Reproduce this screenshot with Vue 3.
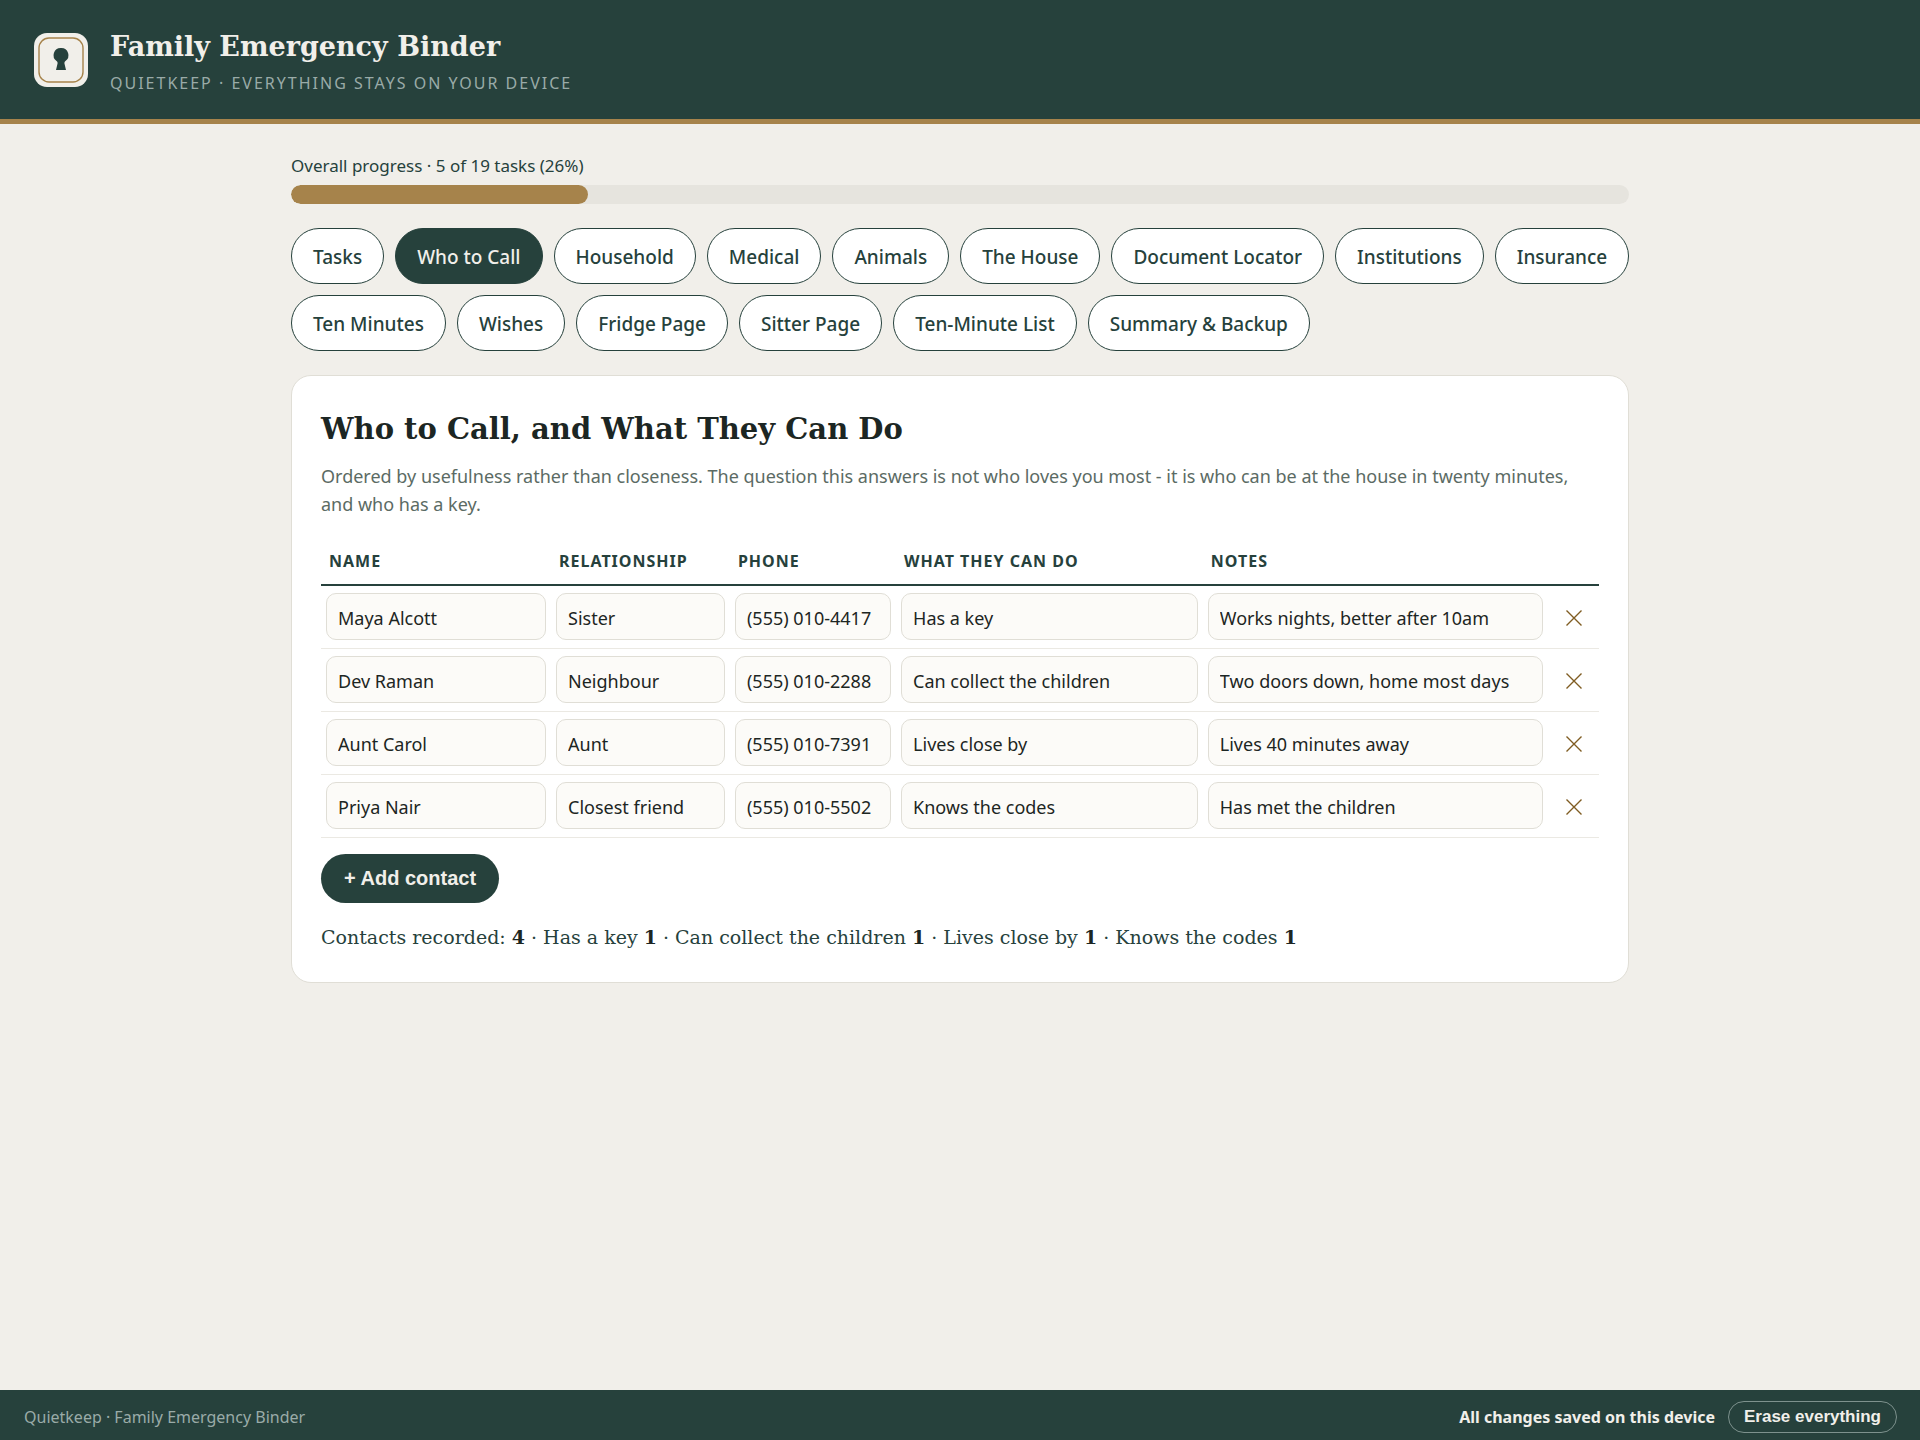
<script setup>
import { computed, ref } from 'vue'

const tabs = [
  'Tasks', 'Who to Call', 'Household', 'Medical', 'Animals', 'The House', 'Document Locator',
  'Institutions', 'Insurance', 'Ten Minutes', 'Wishes', 'Fridge Page', 'Sitter Page',
  'Ten-Minute List', 'Summary & Backup',
]
const active = ref('Who to Call')
const barWidth = ref(22.2)

const columns = [
  { key: 'name', label: 'Name' },
  { key: 'relationship', label: 'Relationship' },
  { key: 'phone', label: 'Phone' },
  { key: 'help', label: 'What they can do' },
  { key: 'notes', label: 'Notes' },
]
const contacts = ref([
  { name: 'Maya Alcott', relationship: 'Sister', phone: '(555) 010-4417', help: 'Has a key', notes: 'Works nights, better after 10am' },
  { name: 'Dev Raman', relationship: 'Neighbour', phone: '(555) 010-2288', help: 'Can collect the children', notes: 'Two doors down, home most days' },
  { name: 'Aunt Carol', relationship: 'Aunt', phone: '(555) 010-7391', help: 'Lives close by', notes: 'Lives 40 minutes away' },
  { name: 'Priya Nair', relationship: 'Closest friend', phone: '(555) 010-5502', help: 'Knows the codes', notes: 'Has met the children' },
])
const abilities = ['Has a key', 'Can collect the children', 'Lives close by', 'Knows the codes']
const totals = computed(() =>
  abilities.map((label) => ({ label, count: contacts.value.filter((c) => c.help === label).length })),
)
function addContact() {
  contacts.value.push({ name: '', relationship: '', phone: '', help: '', notes: '' })
}
</script>

<template>
  <div class="page">
    <header class="masthead">
      <svg class="logo" viewBox="0 0 54 54" aria-hidden="true">
        <rect width="54" height="54" rx="13" fill="#f1efea" />
        <rect x="5" y="5" width="44" height="44" rx="10" fill="none" stroke="#a6834b" stroke-width="1.4" />
        <path d="M27 15a7.200 7.200 0 0 0-4.200 13.200c.8.7.9 1.500.7 2.500L22 37h10l-1.500-6.300c-.2-1 0-1.800.7-2.500A7.200 7.200 0 0 0 27 15z" fill="#26413c" />
      </svg>
      <div>
        <h1>Family Emergency Binder</h1>
        <p class="tagline">QUIETKEEP · EVERYTHING STAYS ON YOUR DEVICE</p>
      </div>
    </header>

    <main>
      <p class="progress-label">Overall progress · 5 of 19 tasks (26%)</p>
      <div class="track"><div class="fill" :style="{ width: barWidth + '%' }"></div></div>

      <nav class="tabs">
        <button
          v-for="tab in tabs" :key="tab" type="button" class="tab"
          :class="{ active: tab === active }" @click="active = tab"
        >{{ tab }}</button>
      </nav>

      <section class="card">
        <h2>Who to Call, and What They Can Do</h2>
        <p class="intro">Ordered by usefulness rather than closeness. The question this answers is not who loves you most - it is who can be at the house in twenty minutes, and who has a key.</p>

        <table>
          <colgroup>
            <col class="c-name"><col class="c-rel"><col class="c-phone"><col class="c-help"><col class="c-notes"><col class="c-del">
          </colgroup>
          <thead>
            <tr>
              <th v-for="col in columns" :key="col.key" scope="col">{{ col.label }}</th>
              <td></td>
            </tr>
          </thead>
          <tbody>
            <tr v-for="(contact, i) in contacts" :key="i">
              <td v-for="col in columns" :key="col.key">
                <input v-model="contact[col.key]" type="text" :aria-label="col.label">
              </td>
              <td>
                <button type="button" class="remove" aria-label="Remove contact" @click="contacts.splice(i, 1)">
                  <svg viewBox="0 0 16 16" aria-hidden="true"><path d="M.5.5l15 15M15.500.5l-15 15" /></svg>
                </button>
              </td>
            </tr>
          </tbody>
        </table>

        <button type="button" class="add" @click="addContact">+ Add contact</button>
        <p class="summary">Contacts recorded: <strong>{{ contacts.length }}</strong><template v-for="t in totals" :key="t.label"> · {{ t.label }} <strong>{{ t.count }}</strong></template></p>
      </section>
    </main>

    <footer>
      <span class="brand">Quietkeep · Family Emergency Binder</span>
      <strong class="saved">All changes saved on this device</strong>
      <button type="button" class="erase">Erase everything</button>
    </footer>
  </div>
</template>

<style>
body {
  margin: 0;
  background: #f1efea;
}
</style>

<style scoped>
* {
  box-sizing: border-box;
}
.page {
  min-height: 100vh;
  display: flex;
  flex-direction: column;
  color: #1c2623;
  font-family: "Noto Sans", "Open Sans", sans-serif;
  font-size: 18px;
}
h1, h2, p {
  margin: 0;
}
h1, h2, .summary {
  font-family: "DejaVu Serif", serif;
}
button {
  cursor: pointer;
}
.masthead {
  display: flex;
  align-items: center;
  gap: 22px;
  padding: 24px 34px;
  background: #26413c;
  border-bottom: 5px solid #a6834b;
}
.logo {
  width: 54px;
  height: 54px;
}
h1 {
  color: #f1efea;
  font-size: 27px;
  line-height: 46px;
}
.tagline {
  margin-top: 2px;
  color: #9aaba8;
  font-size: 16px;
  line-height: 23px;
  letter-spacing: 2px;
}
main {
  flex: 1;
  width: 100%;
  max-width: 1338px;
  margin: 0 auto;
  padding-top: 30px;
}
.progress-label {
  color: #26413c;
  font-size: 17px;
  line-height: 24px;
}
.track {
  height: 19px;
  margin-top: 7px;
  overflow: hidden;
  border-radius: 10px;
  background: #e6e4de;
}
.fill {
  height: 100%;
  border-radius: 10px;
  background: #a6834b;
}
.tabs {
  display: flex;
  flex-wrap: wrap;
  gap: 11px;
  margin: 24px -8px 24px 0;
}
.tab {
  height: 56px;
  padding: 2px 21px 0;
  border: 1px solid #26413c;
  border-radius: 28px;
  background: #fff;
  color: #26413c;
  font-family: inherit;
  font-size: 19px;
  font-weight: 500;
}
.tab.active {
  background: #26413c;
  color: #f1efea;
}
.card {
  padding: 29px;
  border: 1px solid #e0ded6;
  border-radius: 20px;
  background: #fff;
}
h2 {
  font-size: 29px;
  line-height: 48px;
}
.intro {
  margin-top: 9px;
  padding-right: 16px;
  color: #5b6b64;
  line-height: 28px;
}
table {
  width: 100%;
  margin-top: 18px;
  border-collapse: collapse;
  table-layout: fixed;
}
.c-name { width: 18%; }
.c-rel { width: 14%; }
.c-phone { width: 13%; }
.c-help { width: 24%; }
.c-notes { width: 27%; }
.c-del { width: 4%; }
th {
  padding: 13px 8px 11px;
  color: #26413c;
  font-size: 16px;
  line-height: 24px;
  letter-spacing: 1px;
  text-align: left;
  text-transform: uppercase;
}
thead tr {
  border-bottom: 2px solid #26413c;
}
tbody td {
  height: 63px;
  padding: 0 5px;
  border-bottom: 1px solid #ebe9e3;
}
input {
  display: block;
  width: 100%;
  height: 47px;
  padding: 2px 11px 0;
  border: 1px solid #e0ded6;
  border-radius: 10px;
  background: #fcfbf8;
  color: inherit;
  font-family: inherit;
  font-size: 18px;
}
.remove {
  display: flex;
  width: 100%;
  justify-content: center;
  padding: 14px 0 12px 2px;
  border: 0;
  background: none;
}
.remove svg {
  width: 16px;
  height: 16px;
  fill: none;
  stroke: #7f5c22;
  stroke-width: 1.4;
}
.add {
  display: block;
  height: 49px;
  margin-top: 16px;
  padding: 0 23px;
  border: 0;
  border-radius: 25px;
  background: #26413c;
  color: #f1efea;
  font: bold 20px "Liberation Sans", sans-serif;
}
.summary {
  margin-top: 18px;
  color: #26413c;
  font-size: 19px;
  line-height: 32px;
}
.summary strong {
  color: #1c2623;
}
footer {
  display: flex;
  align-items: center;
  height: 50px;
  padding: 4px 23px 0 24px;
  background: #26413c;
  color: #f1efea;
  font-size: 16px;
}
.brand {
  flex: 1;
  color: #9aaba8;
}
.saved {
  margin-right: 13px;
}
.erase {
  height: 32px;
  padding: 0 15px;
  border: 1px solid #7d918d;
  border-radius: 16px;
  background: none;
  color: #f1efea;
  font: bold 17px "Liberation Sans", sans-serif;
}
</style>
